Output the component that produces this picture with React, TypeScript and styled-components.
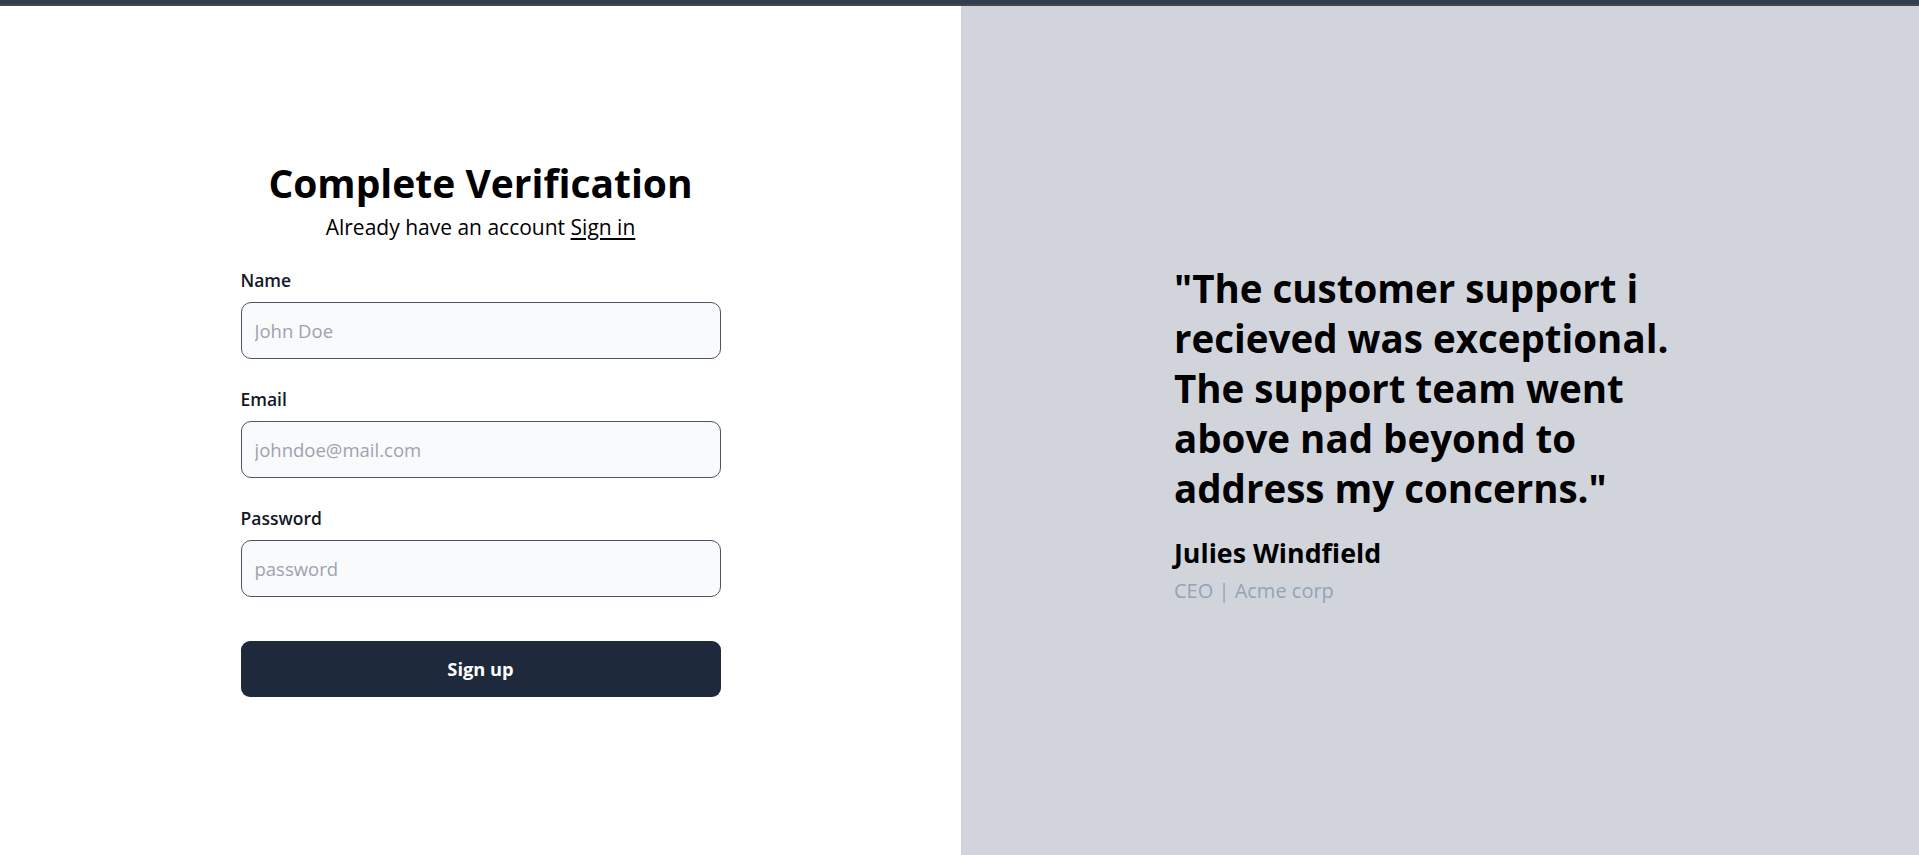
import React from "react";
import styled, { createGlobalStyle } from "styled-components";

const GlobalStyle = createGlobalStyle`
  * { box-sizing: border-box; }
  html, body { margin: 0; padding: 0; }
  body {
    font-family: "Open Sans", "Noto Sans", Arial, sans-serif;
    color: #000;
    background: #fff;
  }
`;

const Page = styled.div`
  min-height: 100vh;
  display: flex;
  flex-direction: column;
`;

const TopBar = styled.div`
  height: 6px;
  background: #333d50;
  border-bottom: 2px solid #46474c;
  flex-shrink: 0;
`;

const Split = styled.main`
  flex: 1;
  display: grid;
  grid-template-columns: 961px 1fr;
`;

const LeftPane = styled.section`
  display: flex;
  align-items: center;
  justify-content: center;
  background: #fff;
  padding-bottom: 6px;
`;

const RightPane = styled.section`
  display: flex;
  align-items: center;
  justify-content: center;
  background: #d1d5db;
  padding-top: 7px;
`;

const FormBlock = styled.div`
  width: 480px;
  display: flex;
  flex-direction: column;
`;

const Header = styled.header`
  text-align: center;
  margin-bottom: 27px;
`;

const Title = styled.h1`
  margin: 0;
  font-size: 39px;
  line-height: 48px;
  font-weight: 700;
  color: #000;
`;

const Subtitle = styled.p`
  margin: 6px 0 0;
  font-size: 21px;
  line-height: 28px;
  color: #000;
`;

const SignInLink = styled.a`
  color: #000;
  text-decoration: underline;
  text-underline-offset: 3px;
`;

const Field = styled.div`
  display: flex;
  flex-direction: column;
  gap: 10px;
  margin-bottom: 28px;
`;

const Label = styled.label`
  font-size: 17.5px;
  line-height: 24px;
  font-weight: 600;
  color: #111827;
`;

const Input = styled.input`
  height: 57px;
  width: 100%;
  border: 1px solid #4b5563;
  border-radius: 10px;
  background: #f8fafc;
  padding: 0 13px;
  font-family: inherit;
  font-size: 18.5px;
  color: #111827;
  outline: none;
  &::placeholder { color: #9ca3af; }
`;

const SubmitButton = styled.button`
  margin-top: 16px;
  height: 56px;
  width: 100%;
  border: none;
  border-radius: 9px;
  background: #1e293b;
  color: #fff;
  font-family: inherit;
  font-size: 18.3px;
  font-weight: 700;
  cursor: pointer;
`;

const QuoteBlock = styled.figure`
  margin: 0;
  width: 532px;
`;

const Quote = styled.blockquote`
  margin: 0;
  font-size: 38.5px;
  line-height: 50px;
  font-weight: 700;
  color: #000;
`;

const Author = styled.figcaption`
  margin-top: 23px;
  display: flex;
  flex-direction: column;
`;

const AuthorName = styled.span`
  font-size: 26.8px;
  line-height: 34px;
  font-weight: 700;
  color: #000;
`;

const AuthorRole = styled.span`
  margin-top: 7px;
  font-size: 20px;
  line-height: 28px;
  font-weight: 400;
  color: #94a3b8;
`;

const fields = [
  { id: "name", label: "Name", type: "text", placeholder: "John Doe" },
  { id: "email", label: "Email", type: "email", placeholder: "johndoe@mail.com" },
  { id: "password", label: "Password", type: "password", placeholder: "password" },
];

export default function App() {
  return (
    <Page>
      <GlobalStyle />
      <TopBar />
      <Split>
        <LeftPane>
          <FormBlock>
            <Header>
              <Title>Complete Verification</Title>
              <Subtitle>
                Already have an account <SignInLink href="#">Sign in</SignInLink>
              </Subtitle>
            </Header>
            <form onSubmit={(e) => e.preventDefault()}>
              {fields.map((f) => (
                <Field key={f.id}>
                  <Label htmlFor={f.id}>{f.label}</Label>
                  <Input id={f.id} type={f.type} placeholder={f.placeholder} />
                </Field>
              ))}
              <SubmitButton type="submit">Sign up</SubmitButton>
            </form>
          </FormBlock>
        </LeftPane>
        <RightPane>
          <QuoteBlock>
            <Quote>
              "The customer support i recieved was exceptional. The support team went above nad beyond to address my concerns."
            </Quote>
            <Author>
              <AuthorName>Julies Windfield</AuthorName>
              <AuthorRole>CEO | Acme corp</AuthorRole>
            </Author>
          </QuoteBlock>
        </RightPane>
      </Split>
    </Page>
  );
}
